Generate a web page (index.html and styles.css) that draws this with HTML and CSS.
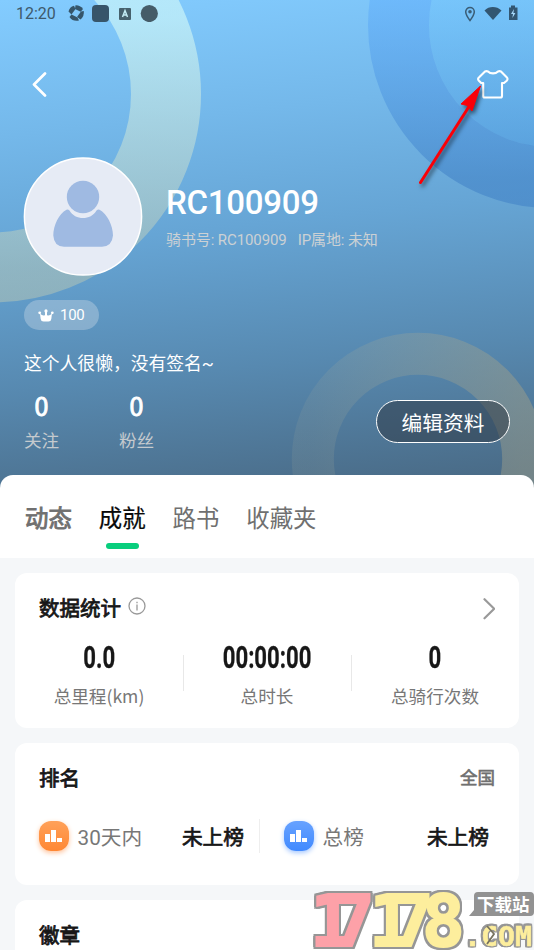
FILE: index.html
```html
<!DOCTYPE html>
<html lang="zh-CN">
<head>
<meta charset="utf-8">
<title>RC100909</title>
<link rel="stylesheet" href="styles.css">
</head>
<body>
<main class="app">
  <section class="hero">
    <svg class="rings" width="534" height="490" viewBox="0 0 534 490" fill="none">
      <defs>
        <linearGradient id="r1" x1="0" y1="0" x2="0" y2="1"><stop offset=".28" stop-color="#d7fcf8" stop-opacity=".6"/><stop offset="1" stop-color="#c4cdb2" stop-opacity=".45"/></linearGradient>
        <linearGradient id="r2" x1="0" y1="0" x2="0" y2="1"><stop offset=".4" stop-color="#58a9ff" stop-opacity=".42"/><stop offset="1" stop-color="#3f80c6" stop-opacity=".55"/></linearGradient>
        <linearGradient id="r2d" x1="0" y1="0" x2="0" y2="1"><stop offset=".4" stop-color="#6cc4ff" stop-opacity=".4"/><stop offset="1" stop-color="#4a98de" stop-opacity=".5"/></linearGradient>
        <linearGradient id="r3" x1="0" y1="0" x2="1" y2="0"><stop offset="0" stop-color="#a7ad9c" stop-opacity=".14"/><stop offset="1" stop-color="#a0a08a" stop-opacity=".48"/></linearGradient>
      </defs>
      <circle cx="-7.5" cy="94" r="173.5" stroke="url(#r1)" stroke-width="70"/>
      <circle cx="551" cy="25" r="122" fill="url(#r2d)"/>
      <circle cx="551" cy="25" r="152.5" stroke="url(#r2)" stroke-width="61"/>
      <circle cx="418" cy="459" r="105.2" stroke="url(#r3)" stroke-width="42"/>
    </svg>
    <header class="status">
      <span class="clock">12:20</span>
      <svg class="status-apps" width="90" height="18" viewBox="0 0 90 18">
        <g fill="#35556a">
          <path d="M.5 7.500Q1.500 3 6 1.700L7.500 5 3.500 10.500z"/>
          <path d="M7.500 1.300Q12 1 15 5l-2.300 2.700L7 5z"/>
          <path d="M15.800 7Q16.500 12 12.500 15.500L9 13l4-5.500z"/>
          <path d="M11 16.500Q5 18 1.500 13L3.500 10.500 9.500 13.500z"/>
        </g>
        <rect x="24" y="1" width="17" height="17" rx="4" fill="#37556a"/>
        <rect x="51" y="4" width="12" height="12" rx="1" fill="#46616c"/>
        <circle cx="81.300" cy="9.500" r="8.600" fill="#455c68"/>
        <path d="M54.500 13l2.500-6.500 2.500 6.500M55.300 11h3.400" fill="none" stroke="#c3edf5" stroke-width="1.500"/>
      </svg>
      <svg class="status-device" width="55" height="18" viewBox="0 0 55 18">
        <path d="M6 15.500C3 11.500 1.700 9 1.700 6.700a4.300 4.300 0 0 1 8.600 0C10.300 9 9 11.500 6 15.500z" fill="none" stroke="#3a5d76" stroke-width="1.500"/>
        <circle cx="6" cy="6.700" r="1.800" fill="#3a5d76"/>
        <path d="M20.500 5.500c4.500-4.600 12-4.600 17 0L29 15z" fill="#325671"/>
        <path d="M45 2.500h2V.5h4v2h2.500V15H45z" fill="#325671"/>
        <path d="M50 4l-3 5h2l-.6 4 3-5h-2z" fill="#a5d8fa"/>
      </svg>
    </header>
    <nav class="topbar">
      <svg width="16" height="26" viewBox="0 0 16 26" fill="none" stroke="#fff" stroke-width="2.700" stroke-linecap="round" stroke-linejoin="round"><path d="M13 1.500 2 12.500l11 11"/></svg>
      <svg width="34" height="30" viewBox="0 0 34 30" fill="none" stroke="#fff" stroke-width="2.100" stroke-linejoin="round"><path d="M9 1.500 2.900 7.500Q1.200 9 2.900 10.700L5.200 13H7.200V26Q7.200 27.500 8.700 27.500H24.500Q26 27.500 26 26V13H28L30.700 10.700Q32.400 9 30.700 7.300L25 1.500Q23.500.8 22 1.500C19.500 4 14.500 4 12 1.500Q10.500.8 9 1.500z"/></svg>
    </nav>
    <div class="profile">
      <svg class="avatar" width="120" height="120" viewBox="0 0 120 120">
        <circle cx="60" cy="60.500" r="58.600" fill="#e6ebf5" stroke="#fff" stroke-width="1.500"/>
        <g fill="#9fbae2"><circle cx="60" cy="41" r="16.200"/>
        <path d="M43.500 53.700Q45 53 46.500 54.500C52 64.500 68 64.500 73.500 54.500Q75 53 76.500 53.700C84 57.500 90 69.500 90 79.500Q89 90.500 79 90.700H41Q31 90.500 30.300 79.500C30.300 69.500 36 57.500 43.500 53.700z"/></g>
      </svg>
      <div class="identity">
        <h1>RC100909</h1>
        <p><span>骑书号: RC100909</span><span>IP属地: 未知</span></p>
      </div>
    </div>
    <div class="badge">
      <svg width="16" height="13" viewBox="0 0 16 13" fill="#fff"><path d="M2 4.500Q5 7.500 7 6V2.500h2V6q2 1.500 5-1.500L13.300 10q-.3 2.500-2.800 2.500h-5Q3 12.500 2.700 10z"/><circle cx="1.700" cy="3.800" r="1.400"/><circle cx="8" cy="1.900" r="1.600"/><circle cx="14.300" cy="3.800" r="1.400"/></svg>
      <span>100</span>
    </div>
    <p class="bio">这个人很懒，没有签名~</p>
    <div class="social">
      <div class="count"><b>0</b><span>关注</span></div>
      <div class="count"><b>0</b><span>粉丝</span></div>
      <button class="edit">编辑资料</button>
    </div>
  </section>
  <nav class="tabs"><span class="strong">动态</span><span class="active">成就</span><span>路书</span><span>收藏夹</span></nav>
  <div class="cards">
    <section class="card data">
      <div class="head">
        <h2>数据统计</h2>
        <svg width="18" height="18" viewBox="0 0 18 18" fill="none" stroke="#999" stroke-width="1.300"><circle cx="9" cy="9" r="8"/><path d="M9 7.500v6M9 4.700v1.500"/></svg>
        <svg class="more" width="14" height="24" viewBox="0 0 14 24" fill="none" stroke="#999" stroke-width="2.200" stroke-linecap="round" stroke-linejoin="round"><path d="m3.500 2.200 9.700 9.500-9.700 9.600"/></svg>
      </div>
      <div class="metrics">
        <div><b>0.0</b><span>总里程(km)</span></div>
        <div><b>00:00:00</b><span>总时长</span></div>
        <div><b>0</b><span>总骑行次数</span></div>
      </div>
    </section>
    <section class="card ranking">
      <div class="head"><h2>排名</h2><span class="region">全国</span></div>
      <div class="ranks">
        <div class="rank"><i class="icon orange"><svg width="17" height="12" viewBox="0 0 17 12" fill="#fff"><path d="M0 4h5v8H0zM6 0h5v12H6zM12 8h5v4h-5z"/></svg></i><span>30天内</span><b>未上榜</b></div>
        <div class="rank"><i class="icon blue"><svg width="17" height="12" viewBox="0 0 17 12" fill="#fff"><path d="M0 4h5v8H0zM6 0h5v12H6zM12 8h5v4h-5z"/></svg></i><span>总榜</span><b>未上榜</b></div>
      </div>
    </section>
    <section class="card"><div class="head"><h2>徽章</h2></div></section>
  </div>
  <svg class="pointer" width="90" height="120" viewBox="0 0 90 120"><path d="M10.500 102.500 60 25" stroke="#fa0008" stroke-width="3" stroke-linecap="round"/><path d="M70.500 6 62 31 57.500 25.500 51 24z" fill="#fa0008" stroke="#fa0008" stroke-width="1"/></svg>
  <svg class="watermark" width="234" height="70" viewBox="0 0 234 70">
    <text class="digits" y="66"><tspan class="red" x="10 32">17</tspan><tspan class="yellow" x="69 91 122">178</tspan></text>
    <path d="M178 12h52q4 0 4 4v16q0 4-4 4h-61l5-6V16q0-4 4-4z" fill="#929292"/>
    <text class="site" x="177" y="31">下载站</text>
    <text class="domain" x="164" y="66" textLength="68" lengthAdjust="spacingAndGlyphs">.COM</text>
    <path d="m187 46 7 8-7 10" fill="none" stroke="#77735f" stroke-width="1.800"/>
  </svg>
</main>
</body>
</html>
```
FILE: styles.css
```css
* { box-sizing: border-box; }
body, h1, h2, p { margin: 0; }
body { font-family: Roboto, "Noto Sans CJK SC", sans-serif; background: #f5f7f9; overflow: hidden; }
svg { display: block; flex: none; }
.app { position: relative; width: 534px; height: 950px; overflow: hidden; }
.hero { position: relative; isolation: isolate; height: 490px; padding: 0 24px; color: #fff; background: linear-gradient(174deg, #83ccff 0%, #74b8ea 25%, #66a5d5 46%, #5789b0 72%, #4a6c88 96%); }
.rings { position: absolute; inset: 0; z-index: -1; }
.status { display: flex; align-items: center; height: 28px; margin: 0 -9px 0 -8px; color: #3d596b; }
.clock { width: 52px; font-size: 16px; line-height: 28px; }
.status-apps { margin-bottom: 2px; }
.status-device { margin-left: auto; margin-bottom: 1px; }
.topbar { display: flex; align-items: center; justify-content: space-between; height: 114px; padding-left: 8px; }
.profile { display: flex; height: 120px; margin: 14px 0 0 -1px; }
.avatar { margin-right: 23px; }
.identity h1 { margin-top: 27px; font-size: 33px; line-height: 40px; font-weight: 500; letter-spacing: -.25px; }
.identity p { display: flex; gap: 11px; margin-top: 7px; color: #ccd1d4; font-size: 15px; line-height: 20px; letter-spacing: -.1px; }
.badge { display: flex; align-items: center; gap: 6px; width: 75px; height: 30px; margin-top: 24px; padding-left: 14px; border-radius: 15px; background: rgba(216, 226, 234, .34); font-size: 15px; letter-spacing: -.3px; }
.bio { margin-top: 21px; font-size: 17.800px; line-height: 26px; }
.social { display: flex; height: 75px; margin-top: 16px; }
.count { display: flex; flex-direction: column; width: 95px; }
.count b { width: 35px; margin-top: -2px; font: 400 25px/28px "Noto Sans CJK SC", sans-serif; -webkit-text-stroke: .9px; text-align: center; }
.count span { margin-top: 9px; color: #c5cace; font-size: 17.600px; line-height: 26px; }
.edit { width: 134px; height: 43px; margin: 7px 0 0 auto; padding: 0; border: 1.500px solid #fff; border-radius: 22px; color: #fff; background: rgba(44, 53, 62, .48); font: 20.700px "Noto Sans CJK SC", sans-serif; }
.tabs { position: relative; display: flex; gap: 27px; height: 83px; margin-top: -15px; padding: 26px 25px 0; border-radius: 13px 13px 0 0; background: #fff; color: #707070; font-size: 23.400px; line-height: 36px; }
.tabs .strong { -webkit-text-stroke: .9px; }
.tabs .active { color: #090909; -webkit-text-stroke: .2px; }
.tabs .active::after { content: ""; display: block; width: 33px; height: 6px; margin: 6px auto 0; border-radius: 3px; background: #08ce7d; }
.cards { display: flex; flex-direction: column; gap: 15px; padding: 15px; }
.card { height: 142px; padding: 21px 24px; border-radius: 12px; background: #fff; color: #171717; }
.data { height: 155px; }
.head { display: flex; align-items: center; height: 30px; }
h2 { font-size: 20.500px; line-height: 30px; font-weight: 400; -webkit-text-stroke: .8px; }
h2 + svg { margin: -6px 0 0 7px; }
.more { margin-left: auto; }
.metrics { display: grid; grid-template-columns: repeat(3, 1fr); margin: 14px -24px 0; }
.metrics div { position: relative; display: flex; flex-direction: column; align-items: center; }
.metrics div + div::before { content: ""; position: absolute; left: 0; top: 17px; width: 1px; height: 36px; background: #e8e8e8; }
.metrics b { font-size: 31px; line-height: 40px; transform: scaleX(.715); -webkit-text-stroke: .3px; }
.metrics span { margin-top: 5px; color: #777; font-family: "Noto Sans CJK SC", sans-serif; font-size: 17.600px; line-height: 26px; }
.region { margin: -6px 0 0 auto; color: #707070; font-size: 17.500px; -webkit-text-stroke: .6px; }
.ranks { display: grid; grid-template-columns: 221px 1fr; margin-top: 25px; height: 34px; }
.rank { display: flex; align-items: center; font-size: 20.700px; }
.rank:first-child { border-right: 1px solid #eee; padding-right: 15px; }
.rank + .rank { padding: 0 6px 0 24px; }
.rank span { margin-left: 9px; color: #777; }
.rank b { margin-left: auto; font-weight: 400; -webkit-text-stroke: .7px; }
.icon { display: grid; place-items: center; width: 30px; height: 30px; margin: -1px 0 0 -.5px; border-radius: 12px; }
.orange { background: linear-gradient(#ffa159, #ff8733); box-shadow: 0 2px 5px #ffc49d; }
.blue { background: linear-gradient(#67a2ff, #418aff); box-shadow: 0 2px 5px #a7c9ff; }
.pointer { position: absolute; left: 410px; top: 80px; filter: drop-shadow(2px 3px 2px rgba(0, 0, 0, .55)); }
.watermark { position: absolute; left: 300px; top: 880px; }
.digits { font: 700 71px "Liberation Mono"; stroke-width: 4px; stroke-linejoin: miter; filter: drop-shadow(2px 0 #969696) drop-shadow(-2px 0 #969696) drop-shadow(0 2px #969696) drop-shadow(0 -2px #969696); }
.digits { font-family: "DejaVu Sans Mono", monospace; stroke-width: 2px; }
.red { fill: #fda1a8; stroke: #fda1a8; }
.yellow { fill: #fdee9d; stroke: #fdee9d; }
.site { fill: #fff; font: 700 17.500px "Noto Sans CJK SC"; }
.domain { fill: #fdee9d; font: 700 26px "DejaVu Sans Mono"; stroke: #fdee9d; stroke-width: .5px; filter: drop-shadow(1.500px 0 #969696) drop-shadow(-1.500px 0 #969696) drop-shadow(0 1.500px #969696) drop-shadow(0 -1.500px #969696); }
```
